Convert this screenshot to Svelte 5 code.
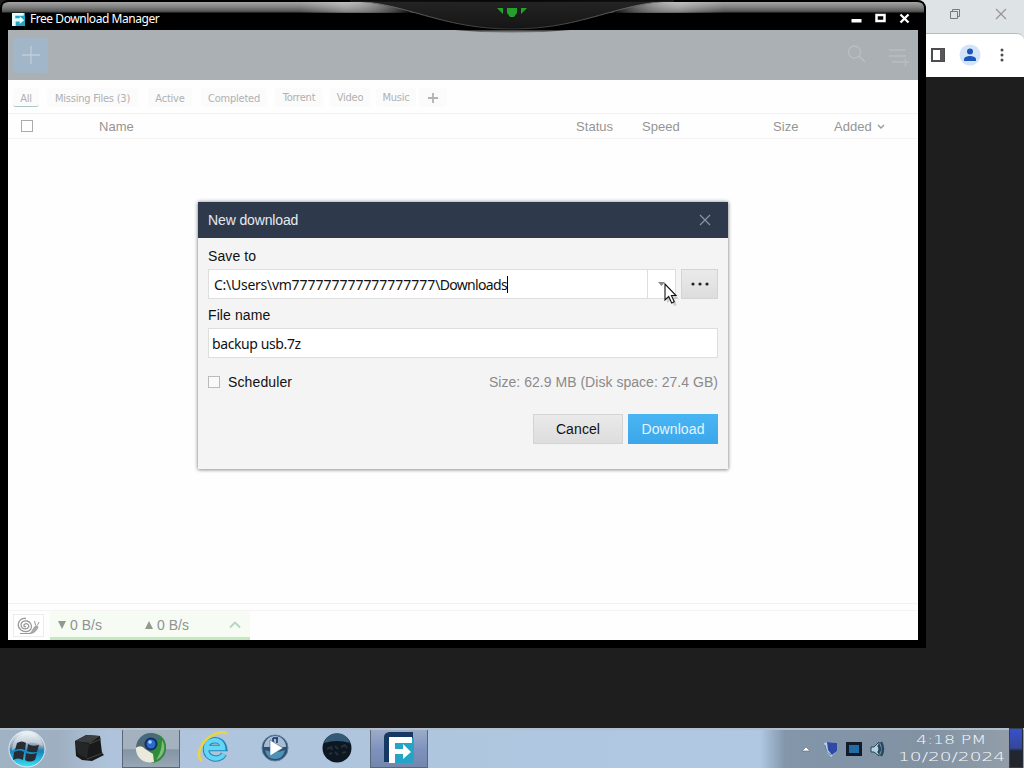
<script>
  const tabs = [
    { label: 'All', w: 26, on: true, ml: 5 },
    { label: 'Missing Files (3)', w: 91, ml: 8 },
    { label: 'Active', w: 44, ml: 10 },
    { label: 'Completed', w: 66, ml: 9 },
    { label: 'Torrent', w: 48, ml: 8, up: true },
    { label: 'Video', w: 40, ml: 7, up: true },
    { label: 'Music', w: 40, ml: 6, up: true },
    { label: '+', w: 28, ml: 3, plus: true }
  ];
</script>

<div class="desktop">
  <section class="browser">
    <div class="browser-title">
      <svg width="12" height="12" viewBox="0 0 12 12" fill="none" stroke="#777b7e"><path d="M1.500 3.500h7v7h-7zM3.500 3.500v-2h7v7h-2" /></svg>
      <svg width="12" height="12" viewBox="0 0 12 12" fill="none" stroke="#99919d" stroke-width="1.200"><path d="M1 1l10 10M11 1L1 11" /></svg>
    </div>
    <div class="browser-tools">
      <svg width="14" height="14" viewBox="0 0 14 14"><path d="M1 1h12v12H1z" fill="#fff" stroke="#4b4c50" stroke-width="2" /><path d="M9 1h4v12H9z" fill="#5a5558" /></svg>
      <svg width="22" height="22" viewBox="0 0 22 22"><circle cx="11" cy="11" r="10.500" fill="#d3e3f8" /><circle cx="11" cy="7.500" r="3" fill="#1a57b8" /><path d="M5 17v-1.800c0-2 3.500-3.200 6-3.200s6 1.200 6 3.200V17z" fill="#1a57b8" /></svg>
      <svg width="4" height="14" viewBox="0 0 4 14" fill="#4b4c50"><circle cx="2" cy="2" r="1.500" /><circle cx="2" cy="7" r="1.500" /><circle cx="2" cy="12" r="1.500" /></svg>
    </div>
  </section>

  <section class="window">
    <svg class="frame" width="926" height="34" viewBox="0 0 926 34">
      <defs>
        <linearGradient id="metal" x2="0" y2="1"><stop offset="0" stop-color="#a5a5a5" /><stop offset=".5" stop-color="#7c7c7c" /><stop offset=".85" stop-color="#555" /><stop offset="1" stop-color="#101010" /></linearGradient>
        <linearGradient id="fade"><stop offset="0" stop-color="#fff" stop-opacity="0" /><stop offset=".4" stop-color="#fff" stop-opacity=".3" /><stop offset="1" stop-color="#000" stop-opacity=".8" /></linearGradient>
        <linearGradient id="fade2" x1="1" x2="0"><stop offset="0" stop-color="#fff" stop-opacity="0" /><stop offset=".4" stop-color="#fff" stop-opacity=".3" /><stop offset="1" stop-color="#000" stop-opacity=".8" /></linearGradient>
        <linearGradient id="belly" x2="0" y2="1"><stop offset="0" stop-color="#242424" /><stop offset="1" stop-color="#151515" /></linearGradient>
        <linearGradient id="rim"><stop offset="0" stop-color="#777" /><stop offset=".5" stop-color="#333" /><stop offset="1" stop-color="#777" /></linearGradient>
        <linearGradient id="shade" x2="0" y2="1"><stop offset="0" stop-color="#333" /><stop offset="1" stop-color="#a0a6a9" /></linearGradient>
      </defs>
      <path d="M0 30V9Q0 0 9 0h908q9 0 9 9v21z" fill="#000" />
      <path d="M2 13V8q0-6 7-6h908q7 0 7 6v5z" fill="url(#metal)" />
      <path d="M300 2h110v11H300z" fill="url(#fade)" /><path d="M614 2h110v11H614z" fill="url(#fade2)" />
      <path d="M455 30q57 6 115 0z" fill="url(#shade)" />
      <path d="M350 1c55 1 90 28 162 28s107-27 162-28z" fill="url(#belly)" stroke="url(#rim)" stroke-width="1" />
      <path d="M9 0h908v2H7z" fill="#000" opacity=".75" />
      <path d="M497 8h6v6zM527 8h-6v6zM507 8h10v5l-3 4h-4l-3-4z" fill="#23a12a" />
    </svg>
    <header>
      <svg width="13" height="13" viewBox="0 0 32 32"><path d="M0 0h32v32H0z" fill="#23a4c4" /><path d="M0 0h29v7H8v6h11V8l11 10-11 9v-6H9v11H0z" fill="#e5fcff" /></svg>
      <span class="title">Free Download Manager</span>
      <svg class="controls" width="62" height="12" viewBox="0 0 62 12"><path d="M3.500 6h10v3.500h-10z" fill="#fff" /><path d="M28.500 2h8v6h-8z" fill="none" stroke="#fff" stroke-width="2.500" /><path d="M52.500 1.500l8 8M60.500 1.500l-8 8" stroke="#fff" stroke-width="2.300" /></svg>
    </header>

    <div class="client">
      <div class="toolbar">
        <button class="add" aria-label="Add"><svg width="20" height="20" viewBox="0 0 20 20" stroke="#c0ced8" stroke-width="1.300"><path d="M10 1v18M1 10h18" /></svg></button>
        <svg width="62" height="24" viewBox="0 0 62 24" fill="none" stroke="#b9bec1" stroke-width="1.500"><circle cx="7.500" cy="9" r="6" /><path d="M12 13l6 6M42 7h17M42 13h17M45 19h11M55 19h7M58.500 16v7" /></svg>
      </div>
      <nav>
        {#each tabs as t}
          <span class="tab" class:on={t.on} class:up={t.up} class:plus={t.plus} style:width="{t.w}px" style:margin-left="{t.ml}px">{#if t.plus}<svg width="12" height="12" viewBox="0 0 12 12" stroke="#b2b2b2" stroke-width="1.800"><path d="M6 1v10M1 6h10" /></svg>{:else}{t.label}{/if}</span>
        {/each}
      </nav>
      <div class="columns">
        <i class="box"></i><span>Name</span><span>Status</span><span>Speed</span><span>Size</span><span>Added <svg width="8" height="6" viewBox="0 0 8 6" fill="none" stroke="#999" stroke-width="1.400"><path d="M1 1l3 3 3-3" /></svg></span>
      </div>
      <div class="list"></div>
      <footer>
        <button class="snail" aria-label="Speed mode"><svg width="23" height="18" viewBox="0 0 23 18" fill="none" stroke="#979797" stroke-width="1.300"><path d="M9 9.500c-2 1-3-1.500-1-2.500s4.500 1 3.500 3-4 2.500-6 1-2-5 .5-6.500 6-.5 7.500 2 1 5.500-1 7-6 1.500-8.500-.5-3.500-5-2-8 4.500-4 7-3.500" /><path d="M3 16.500h9c3 0 4-6 7-8l2 1c-1 4-4 7-8 7z" fill="#aaa" stroke-width=".8" /><path d="M18.500 8l-1-4M20.500 8l1.500-3" stroke-width="1" /></svg></button>
        <div class="speeds">
          <svg width="8" height="8" viewBox="0 0 8 8"><path d="M0 0h8L4 8z" fill="#929a90" /></svg><span class="rate down">0 B/s</span>
          <svg width="8" height="8" viewBox="0 0 8 8"><path d="M0 8h8L4 0z" fill="#929a90" /></svg><span class="rate upload">0 B/s</span>
          <svg width="12" height="8" viewBox="0 0 12 8" fill="none" stroke="#b4d6ba" stroke-width="1.800"><path d="M1 6.500l5-5 5 5" /></svg>
        </div>
      </footer>
    </div>
  </section>

  <section class="dialog">
    <div class="dialog-head"><span>New download</span><svg width="12" height="12" viewBox="0 0 12 12" stroke="#8b939e" stroke-width="1.300"><path d="M1 1l10 10M11 1L1 11" /></svg></div>
    <div class="body">
      <div class="label first">Save to</div>
      <div class="save-row">
        <div class="field path"><span>C:\Users\vm<span class="digits">777777777777777777</span><span class="tail">\Downloads</span></span><i class="caret"></i></div>
        <div class="drop"><svg width="7" height="5" viewBox="0 0 7 5"><path d="M0 0h7L3.500 4z" fill="#888" /></svg></div>
        <button class="gray more" aria-label="Browse"><svg width="18" height="4" viewBox="0 0 18 4" fill="#222"><circle cx="2" cy="2" r="1.600" /><circle cx="9" cy="2" r="1.600" /><circle cx="16" cy="2" r="1.600" /></svg></button>
      </div>
      <div class="label second">File name</div>
      <div class="field name"><span>backup usb.7z</span></div>
      <div class="info"><i class="box"></i><span>Scheduler</span><span class="size">Size: 62.9 MB (Disk space: 27.4 GB)</span></div>
      <div class="actions"><button class="gray">Cancel</button><button class="blue">Download</button></div>
    </div>
  </section>

  <svg class="cursor" width="16" height="23" viewBox="0 0 16 23"><path d="M3 3v17l4-3 3 6 3-1-3-6h5z" fill="#888" opacity=".35" /><path d="M1 1v16l3.700-3.500 3 6.500 2.600-1.200-2.900-6.300H12z" fill="#fff" stroke="#111" stroke-width="1.100" /></svg>

  <div class="taskbar">
    <div class="task start">
      <svg width="40" height="38" viewBox="0 0 40 38"><defs><linearGradient id="orb" x2="0" y2="1"><stop offset="0" stop-color="#f1f8fb" /><stop offset=".43" stop-color="#849baf" /><stop offset=".55" stop-color="#1683b8" /><stop offset="1" stop-color="#3be2f8" /></linearGradient></defs><circle cx="20" cy="19" r="18" fill="url(#orb)" stroke="#e1edf4" /><path d="M5 21C5 8 14 3 21 3s15 5 15 14c-9-7-20-5-31 4z" fill="#fff" opacity=".35" /><path d="M10 13q5-3 9 0l-1 7q-5-2-10 0zM21 14q4 3 11 1l-2 7q-6 1-10-1zM7 22q6-3 10 0l-1 8q-5-3-10 0zM19 23q5 2 11 0l-2 7q-6 3-10 0z" fill="#272b35" /></svg>
    </div>
    <div class="task"><svg width="34" height="30" viewBox="0 0 34 30"><path d="M3 8L14 2l14 1 2 17 2 2-12 6-10-1-6-4z" fill="#17191b" /><path d="M3 8l12-6 13 1-10 7z" fill="#3b3e41" /><path d="M3 8l14 3-2 15-9-5z" fill="#242628" /><path d="M15 26l16-6M17 11l12-5" stroke="#444" /></svg></div>
    <div class="task active"><svg width="32" height="32" viewBox="0 0 32 32"><circle cx="16" cy="16" r="15" fill="#53676c" /><path d="M17 2c19-2 18 27 0 29l-4-8 8-9z" fill="#308d37" /><path d="M27 8c5 8 1 17-6 20 4-6 6-12 6-20z" fill="#82bd80" /><path d="M1 16c2-2 6-3 9 1l8 5 1 8C9 33 0 25 1 16z" fill="#e9eadb" /><path d="M2 12C5 0 20-2 27 7l-9 3z" fill="#476a7d" /><circle cx="16" cy="12" r="6.500" fill="#152d66" /><circle cx="16" cy="12" r="4.500" fill="#286cce" /><circle cx="15" cy="10" r="1.800" fill="#a7d6ff" /></svg></div>
    <div class="task"><svg width="34" height="34" viewBox="0 0 34 34" fill="none"><path d="M28 23c-4 7-18 6-18-5S26 6 28 17H12" stroke="#2585b8" stroke-width="6.500" /><path d="M28 23c-4 7-18 6-18-5S26 6 27 17H12" stroke="#62d6f2" stroke-width="4.500" /><path d="M6 30C-1 25 5 10 17 4c7-4 12-3 14-1" stroke="#e5d44c" stroke-width="2.800" /></svg></div>
    <div class="task"><svg width="28" height="28" viewBox="0 0 28 28"><circle cx="14" cy="14" r="13" fill="#304e72" stroke="#5b7e99" /><path d="M3 13a11 11 0 0 1 22 0z" fill="#a6bdd1" /><path d="M4 16q10 4 20 0-2 9-10 9T4 16z" fill="#4d93b5" /><path d="M12 4h5M12 4v5M16 4v5" stroke="#152f70" stroke-width="1.500" fill="none" /><path d="M9 6v16l13-8z" fill="#fff" stroke="#3e6893" stroke-width=".6" /></svg></div>
    <div class="task"><svg width="30" height="30" viewBox="0 0 30 30"><circle cx="15" cy="15" r="14.500" fill="#0c1722" /><path d="M2 10C6-3 24-3 28 10q-13-4-26 0z" fill="#345a75" /><path d="M5 16l4-2 1 3M13 13l3 3M19 14l4-2 2 3M7 21l3-1M13 19l3 3M20 20l4-1" fill="none" stroke="#252f38" stroke-width="2" /></svg></div>
    <div class="task active fdm"><svg width="32" height="32" viewBox="0 0 32 32"><path d="M6 0h24v6H7v24H1V5Q1 1 6 0z" fill="#153962" /><path d="M7 6h24v25H7z" fill="#25a4c5" /><path d="M6 5h23v6H12v6h8v-5l8 8-8 7v-5h-8v9H6z" fill="#fff" /></svg></div>
    <div class="tray">
      <svg width="10" height="6" viewBox="0 0 10 6"><path d="M1 5l4-4 4 4z" fill="#fff" stroke="#5c6b79" stroke-width=".6" /></svg>
      <svg width="15" height="16" viewBox="0 0 15 16"><path d="M1 2l5-1 8 1v8l-6 6-4-4z" fill="#b9cfe4" /><path d="M4 1l10 1v8l-5 4-4-5z" fill="#2f49a5" /><path d="M2 4q1 8 6 10" stroke="#5a7a9a" fill="none" /></svg>
      <svg width="16" height="14" viewBox="0 0 16 14"><path d="M1.500 1.500h13v11h-13z" fill="#246ca5" stroke="#111b29" stroke-width="3" /></svg>
      <svg width="15" height="16" viewBox="0 0 15 16" fill="none"><path d="M1 6h3l5-5v14l-5-4H1z" fill="#b9d0dd" stroke="#26445c" /><path d="M8 4q4 4 0 8M11 1q4 7 0 14" stroke="#244961" stroke-width="2.500" /></svg>
    </div>
    <div class="clock"><span class="time">4:18 PM</span><span class="date">10/20/2024</span></div>
    <div class="show"></div>
  </div>
</div>

<style>
  :global(body) { margin: 0; overflow: hidden; }
  * { box-sizing: border-box; }
  svg { display: block; flex: none; }
  button { border: 0; padding: 0; font: inherit; }
  .desktop { position: relative; width: 1024px; height: 768px; overflow: hidden; background: #1e1e1e; display: flex; flex-direction: column; justify-content: flex-end; font: 14px "Liberation Sans", Arial, sans-serif; }
  .browser { position: absolute; left: 900px; top: 0; width: 124px; height: 77px; background: #dee4e6; }
  .browser-title { height: 33px; display: flex; justify-content: flex-end; gap: 34px; padding: 8px 17px 0 0; }
  .browser-tools { height: 44px; background: #fff; border-top: 1px solid #b7bdbf; border-radius: 0 7px 0 0; display: flex; align-items: center; justify-content: flex-end; gap: 14px; padding: 0 20px 2px 0; }
  .browser-tools svg:last-child { margin-left: 5px; }
  .window { position: absolute; left: 0; top: 0; width: 926px; height: 648px; background: #000; border-radius: 9px 9px 0 0; padding: 0 8px 8px; }
  .frame { position: absolute; left: 0; top: 0; z-index: 1; }
  header { position: relative; z-index: 2; height: 30px; display: flex; align-items: center; padding: 8px 8px 0 4px; color: #fff; }
  .title { font: 12px/16px "Noto Sans", sans-serif; margin-left: 5px; letter-spacing: -.45px; }
  .controls { margin-left: auto; }
  .client { height: 610px; background: #fefefe; display: flex; flex-direction: column; }
  .toolbar { height: 50px; background: #aab0b3; display: flex; justify-content: space-between; align-items: center; padding: 0 9px 0 5px; }
  .add { width: 35px; height: 35px; border-radius: 3px; background: #a1b6c8; display: grid; place-items: center; }
  nav { height: 34px; display: flex; align-items: flex-start; padding-top: 8px; border-bottom: 1px solid #f2f2f2; }
  .tab { height: 19px; flex: none; text-align: center; background: #fbfbfb; border-radius: 3px; color: #b0b0b0; font: 11px/21px "DejaVu Sans Condensed", sans-serif; letter-spacing: -.22px; white-space: nowrap; }
  .tab.on { border-bottom: 1px solid #acc5cb; }
  .tab.up { line-height: 19px; }
  .tab.plus { display: grid; place-items: center; }
  .columns { height: 25px; border-bottom: 1px solid #f4f4f4; display: grid; grid-template-columns: 91px 477px 66px 131px 61px 1fr; color: #959595; font-size: 13px; line-height: 25px; letter-spacing: .05px; }
  .columns .box { margin: 6px 0 0 13px; width: 12px; height: 12px; border: 1px solid #aaa; }
  .columns svg { display: inline-block; margin: 0 0 1px 1px; }
  .list { flex: 1; border-bottom: 1px solid #f2f2f2; margin-bottom: 6px; }
  footer { height: 30px; border-top: 1px solid #f4f4f4; display: flex; flex: none; }
  .snail { width: 31px; height: 23px; margin: 3px 0 0 5px; border: 1px solid #ececec; background: #fff; display: grid; place-items: center; }
  .speeds { margin-left: 6px; width: 200px; height: 29px; background: #f6fbf4; border-bottom: 3px solid #c6e8c0; display: flex; align-items: center; padding: 1px 0 0 8px; color: #929292; line-height: 20px; }
  .rate { margin-left: 4px; white-space: nowrap; }
  .down { width: 75px; } .upload { width: 72px; }
  .dialog { position: absolute; left: 198px; top: 202px; width: 530px; height: 267px; background: #f4f4f4; box-shadow: 0 0 4px #8b9198, 0 1px 3px #bbb; color: #111; }
  .dialog-head { height: 36px; background: #2e394b; color: #e5eaf0; display: flex; justify-content: space-between; align-items: center; padding: 0 17px 0 10px; letter-spacing: -.13px; }
  .body { padding: 0 10px; }
  .label { line-height: 18px; letter-spacing: .1px; }
  .first { padding-top: 9px; height: 31px; }
  .second { height: 29px; padding-top: 7px; }
  .save-row { display: flex; height: 30px; }
  .field { height: 30px; background: #fff; border: 1px solid #dedede; display: flex; align-items: center; padding-left: 3px; font: 14px "Noto Sans", sans-serif; letter-spacing: -.27px; color: #111; white-space: pre; }
  .digits { letter-spacing: -.03px; }
  .tail { letter-spacing: -.68px; }
  .name { letter-spacing: -.4px; }
  .path { width: 440px; padding-left: 5px; }
  .caret { height: 17px; width: 1px; background: #000; }
  .drop { width: 28px; border: 1px solid #dedede; border-left: 0; background: #fff; display: grid; place-items: center; }
  .gray { width: 90px; height: 30px; background: linear-gradient(#eaeaea, #ddd); border: 1px solid #d4d4d4; color: #111; }
  .more { width: 37px; margin-left: 5px; display: grid; place-items: center; }
  .info { height: 18px; margin-top: 15px; display: flex; align-items: center; letter-spacing: .12px; }
  .info .box { width: 12px; height: 12px; border: 1px solid #bbb; margin-right: 8px; background: #f9f9f9; }
  .size { margin-left: auto; color: #8a8a8a; letter-spacing: .03px; }
  .actions { display: flex; justify-content: flex-end; gap: 5px; margin-top: 23px; }
  .blue { width: 90px; height: 30px; background: linear-gradient(#4ab5f3, #3ba7ea); color: #e4f5ff; }
  .gray, .blue { letter-spacing: .1px; }
  .cursor { position: absolute; left: 664px; top: 283px; z-index: 4; }
  .taskbar { height: 40px; display: flex; border-top: 2px solid #b3c0cb; background: linear-gradient(90deg, #a0b3c5, #9eafc1 58px, #afc4dc 110px, #b0c8e2 760px, #8396aa 785px, #8192a3 920px, #929da9 1010px); }
  .task { width: 62px; display: grid; place-items: center; padding-bottom: 2px; }
  .start { width: 58px; padding: 0 4px 0 0; }
  .active { width: 58px; margin: 0 2px; border: 1px solid #596777; border-top: 0; background: linear-gradient(#a4b1be 52%, #8594a4 53%, #97a7b6); }
  .fdm { background: linear-gradient(#9cabc7, #7e91bd 55%, #7387ac); }
  .tray { margin-left: auto; display: flex; align-items: center; gap: 8px; padding-bottom: 1px; }
  .tray svg:first-child { margin-right: 4px; }
  .clock { width: 107px; margin: 0 2px 0 13px; color: #f7faff; font: 200 12px/16px "DejaVu Sans", sans-serif; display: flex; flex-direction: column; align-items: center; padding-top: 2px; }
  .clock span { white-space: nowrap; }
  .time { transform: scaleX(1.45); }
  .date { transform: translateY(1px) scaleX(1.55); }
  .show { width: 14px; margin: -2px 1px 0 2px; background: linear-gradient(#3850cd, #354797 50%, #202631 58%, #25252a); border: 1px solid #344055; border-right-color: #242b38; }
</style>
